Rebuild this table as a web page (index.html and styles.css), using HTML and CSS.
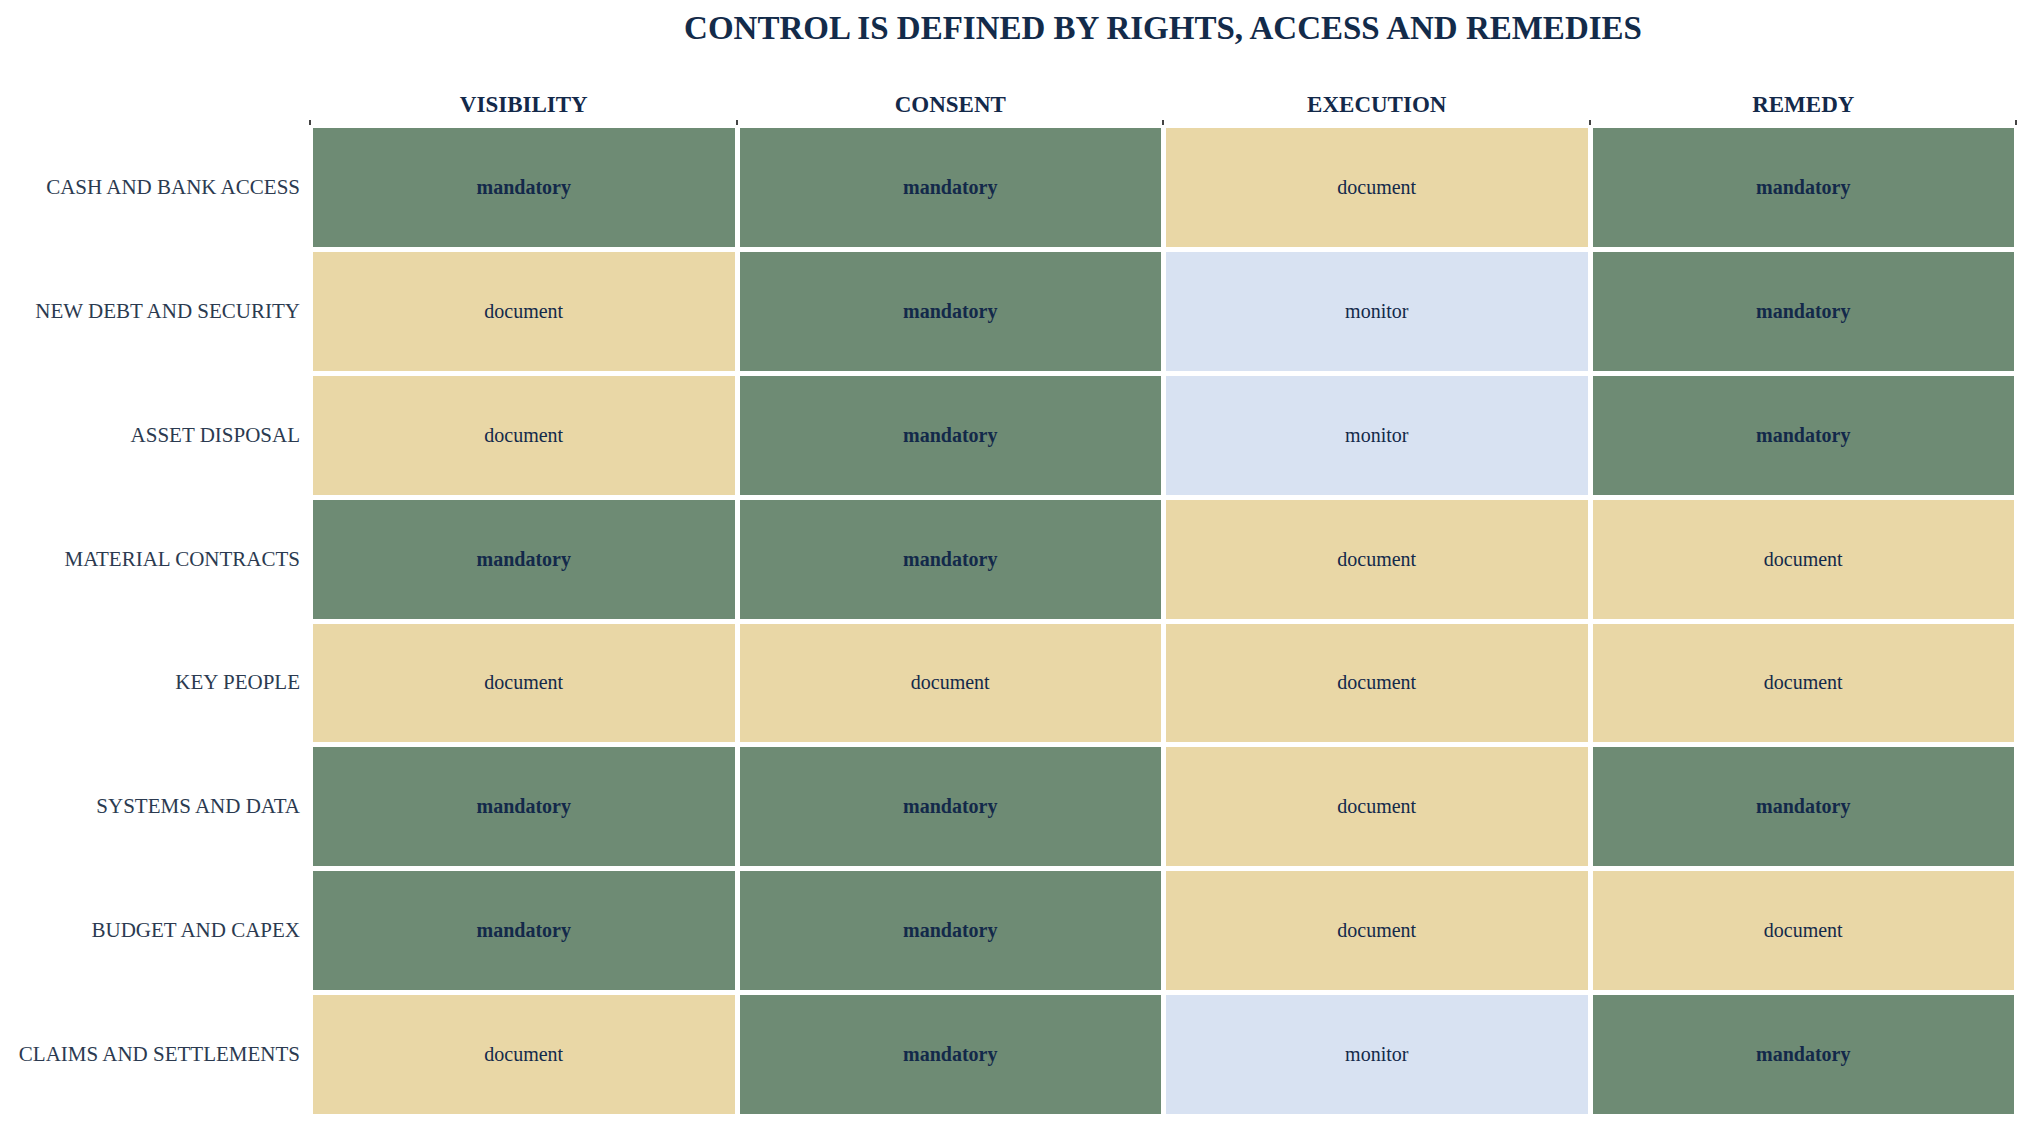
FILE: index.html
```html
<!DOCTYPE html>
<html>
<head>
<meta charset="utf-8">
<link rel="stylesheet" href="styles.css">
</head>
<body>
<div class="chart">
  <h1 class="title">CONTROL IS DEFINED BY RIGHTS, ACCESS AND REMEDIES</h1>
  <div class="header">
    <span></span>
    <span class="col">VISIBILITY</span>
    <span class="col">CONSENT</span>
    <span class="col">EXECUTION</span>
    <span class="col">REMEDY</span>
  </div>
  <div class="ticks"><i></i><i></i><i></i><i></i><i></i></div>
  <div class="grid">
    <div class="label">CASH AND BANK ACCESS</div>
    <div class="cell man">mandatory</div><div class="cell man">mandatory</div><div class="cell doc">document</div><div class="cell man">mandatory</div>
    <div class="label">NEW DEBT AND SECURITY</div>
    <div class="cell doc">document</div><div class="cell man">mandatory</div><div class="cell mon">monitor</div><div class="cell man">mandatory</div>
    <div class="label">ASSET DISPOSAL</div>
    <div class="cell doc">document</div><div class="cell man">mandatory</div><div class="cell mon">monitor</div><div class="cell man">mandatory</div>
    <div class="label">MATERIAL CONTRACTS</div>
    <div class="cell man">mandatory</div><div class="cell man">mandatory</div><div class="cell doc">document</div><div class="cell doc">document</div>
    <div class="label">KEY PEOPLE</div>
    <div class="cell doc">document</div><div class="cell doc">document</div><div class="cell doc">document</div><div class="cell doc">document</div>
    <div class="label">SYSTEMS AND DATA</div>
    <div class="cell man">mandatory</div><div class="cell man">mandatory</div><div class="cell doc">document</div><div class="cell man">mandatory</div>
    <div class="label">BUDGET AND CAPEX</div>
    <div class="cell man">mandatory</div><div class="cell man">mandatory</div><div class="cell doc">document</div><div class="cell doc">document</div>
    <div class="label">CLAIMS AND SETTLEMENTS</div>
    <div class="cell doc">document</div><div class="cell man">mandatory</div><div class="cell mon">monitor</div><div class="cell man">mandatory</div>
  </div>
</div>
</body>
</html>
```
FILE: styles.css
```css
html, body {
  margin: 0;
  padding: 0;
  background: #ffffff;
}
body {
  font-family: "Liberation Serif", "Times New Roman", serif;
  color: #13294a;
}
.chart {
  width: 2034px;
}
.title {
  margin: 0 0 0 310px;
  width: 1706px;
  padding-top: 8px;
  height: 40px;
  line-height: 40px;
  font-size: 33px;
  font-weight: bold;
  text-align: center;
  color: #132b4a;
}
.header {
  display: grid;
  grid-template-columns: 308px repeat(4, 1fr);
  column-gap: 5px;
  width: 2014px;
  margin-top: 44px;
  font-size: 23px;
  line-height: 26px;
  font-weight: bold;
  color: #13294a;
}
.col {
  text-align: center;
}
.ticks {
  display: flex;
  justify-content: space-between;
  margin: 2px 0 0 309px;
  width: 1708px;
  height: 5px;
}
.ticks i {
  display: block;
  width: 2px;
  height: 5px;
  background: #444444;
}
.grid {
  display: grid;
  grid-template-columns: 308px repeat(4, 1fr);
  grid-template-rows: repeat(8, 1fr);
  gap: 5px;
  width: 2014px;
  height: 986px;
  margin-top: 3px;
}
.label {
  display: flex;
  align-items: center;
  justify-content: flex-end;
  padding-right: 8px;
  font-size: 21px;
  color: #2b3a50;
  white-space: nowrap;
}
.cell {
  display: flex;
  align-items: center;
  justify-content: center;
  font-size: 20px;
  color: #13294a;
}
.man {
  background: #6e8b74;
  font-weight: bold;
}
.doc {
  background: #e9d7a6;
}
.mon {
  background: #d8e2f2;
}
```
